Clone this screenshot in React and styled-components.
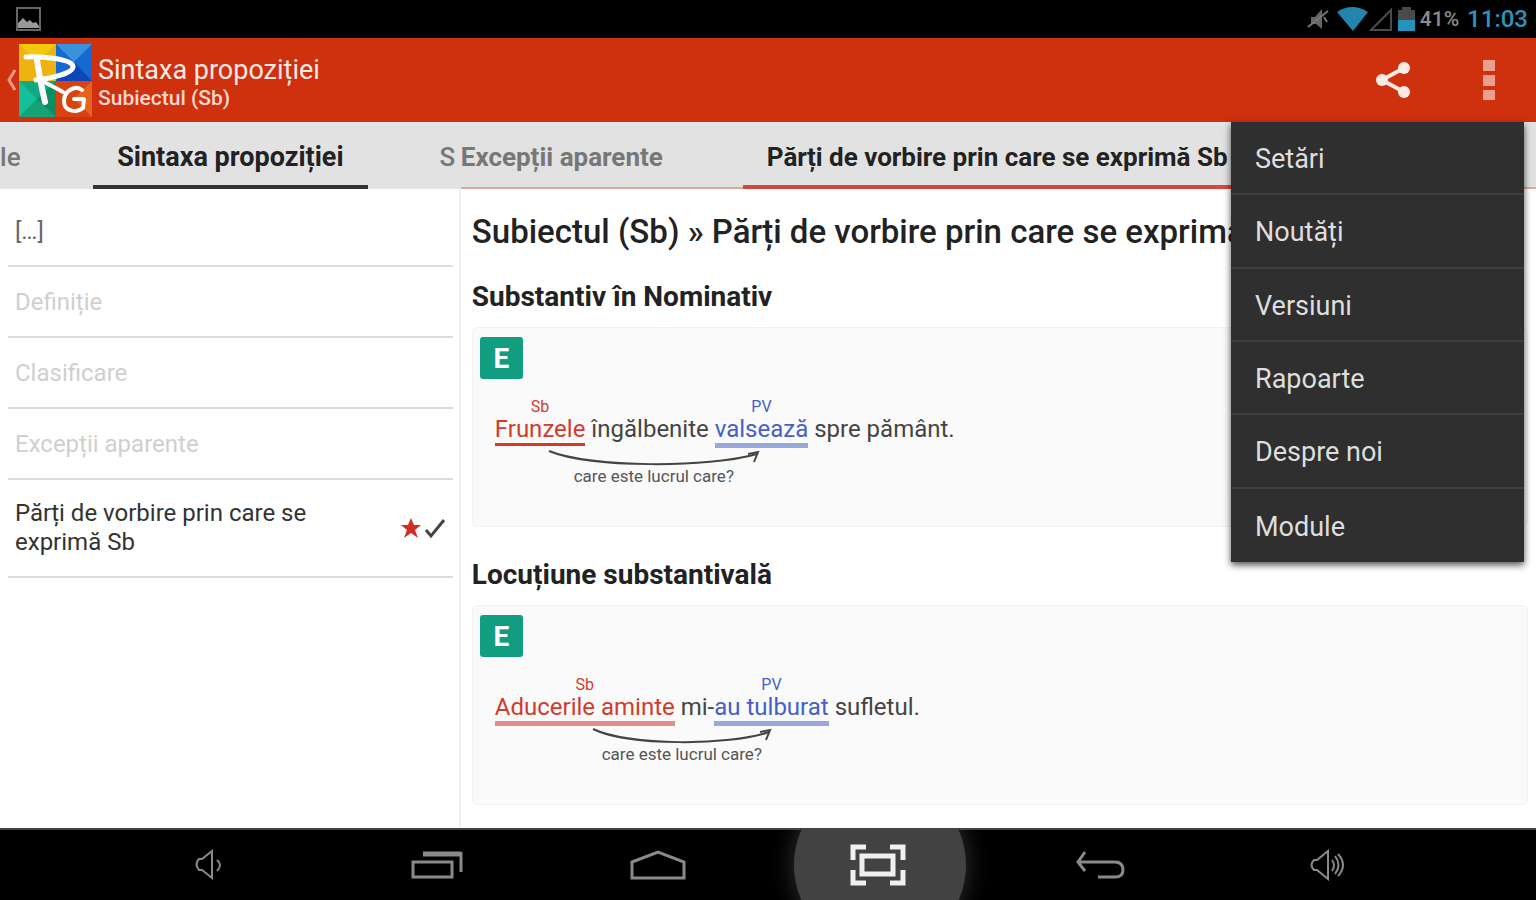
import styled, { createGlobalStyle } from "styled-components";

const GlobalStyle = createGlobalStyle`
  * {
    box-sizing: border-box;
  }
  body {
    margin: 0;
    font-family: Roboto, "Liberation Sans", sans-serif;
    background-color: #fff;
  }
  button {
    margin: 0;
    padding: 0;
    border: none;
    background: none;
    font: inherit;
    color: inherit;
    cursor: pointer;
  }
  svg {
    display: block;
  }
`;

const Container = styled.div`
  min-height: 100vh;
  display: flex;
  flex-direction: column;
`;

const StatusBar = styled.div`
  height: 38px;
  padding: 0 8px 0 15px;
  display: flex;
  align-items: center;
  justify-content: space-between;
  background-color: #000;
`;

const StatusIcons = styled.div`
  display: flex;
  align-items: center;
`;

const SignalIcon = styled.svg`
  margin-left: -9px;
`;

const Battery = styled.span`
  margin-left: 4px;
  font-size: 21px;
  font-weight: 500;
  color: #8c8c8c;
`;

const Clock = styled.span`
  margin-left: 8px;
  font-size: 24px;
  font-weight: 500;
  color: #2b94bd;
`;

const ActionBar = styled.header`
  position: relative;
  height: 84px;
  padding: 0 35px 0 6px;
  display: flex;
  align-items: center;
  justify-content: space-between;
  background-color: #cf300d;
`;

const Brand = styled.button`
  display: flex;
  align-items: center;
  gap: 3px;
  text-align: left;
`;

const Titles = styled.span`
  display: flex;
  flex-direction: column;
  padding: 4px 0 0 3px;
`;

const Title = styled.span`
  font-size: 27px;
  line-height: 32px;
  color: #fbe9e4;
`;

const Subtitle = styled.span`
  font-size: 21px;
  line-height: 25px;
  font-weight: 500;
  color: #fbd9d0;
`;

const Actions = styled.div`
  display: flex;
  align-items: center;
  gap: 66px;
`;

const Menu = styled.ul`
  position: absolute;
  top: 100%;
  right: 12px;
  z-index: 2;
  width: 293px;
  height: 440px;
  margin: 0;
  padding: 0;
  display: grid;
  grid-auto-rows: 1fr;
  list-style: none;
  background-color: #2f2f2f;
  box-shadow: 0 3px 7px rgba(0, 0, 0, 0.7);
`;

const MenuItem = styled.li`
  border-bottom: 2px solid #3e3e3e;
  &:last-child {
    border-bottom: none;
  }
`;

const MenuButton = styled.button`
  width: 100%;
  height: 100%;
  padding: 3px 24px 0;
  font-size: 27px;
  text-align: left;
  color: #dedede;
`;

const Main = styled.main`
  flex: 1;
  display: grid;
  grid-template-columns: 30% 1fr;
`;

const Side = styled.nav`
  min-width: 0;
  display: flex;
  flex-direction: column;
`;

const Content = styled.section`
  min-width: 0;
`;

const SideTabs = styled.div`
  height: 67px;
  display: grid;
  grid-template-columns: minmax(0, 1fr) auto minmax(0, 1fr);
  overflow: hidden;
  background-color: #e2e2e2;
`;

const ContentTabs = styled.div`
  height: 67px;
  display: flex;
  overflow: hidden;
  background-color: #e2e2e2;
  box-shadow: inset 0 -2px 0 #e0a79f;
`;

const Tab = styled.button`
  padding: 7px 24px 0;
  font-size: 26px;
  font-weight: 700;
  color: ${(props) => (props.$active ? "#222" : "#777")};
  white-space: nowrap;
  border-bottom: 4px solid ${(props) => props.$line || "transparent"};
`;

const SideTab = styled(Tab)`
  font-size: 27px;
`;

const PreviousTab = styled(Tab)`
  padding-left: 0;
  padding-right: 73px;
  font-weight: 500;
  text-align: right;
`;

const NextTab = styled(Tab)`
  padding-left: 72px;
  padding-right: 0;
  font-weight: 500;
  text-align: left;
`;

const FirstTab = styled(Tab)`
  padding-left: 0;
  padding-right: 80px;
`;

const List = styled.ul`
  flex: 1;
  margin: 0;
  padding: 7px 6px 7px 8px;
  list-style: none;
  border-right: 2px solid #f0f0f0;
`;

const Item = styled.li`
  border-bottom: 2px solid #dcdcdc;
`;

const ItemButton = styled.button`
  width: 100%;
  min-height: 69px;
  padding: ${(props) => (props.$active ? "19px 7px" : "2px 7px 0")};
  display: flex;
  align-items: center;
  justify-content: space-between;
  gap: 24px;
  font-size: 24px;
  line-height: 29px;
  text-align: left;
  color: ${(props) => props.$color};
`;

const ItemText = styled.span`
  max-width: 320px;
`;

const Marks = styled.span`
  display: flex;
  align-items: center;
  gap: 4px;
`;

const Article = styled.article`
  padding: 24px 8px 20px 11px;
`;

const Heading = styled.h1`
  margin: 0 0 30px;
  font-size: 33px;
  line-height: 38px;
  font-weight: 500;
  color: #222;
  white-space: nowrap;
  overflow: hidden;
`;

const SubHeading = styled.h2`
  margin: 0 0 14px;
  font-size: 28px;
  line-height: 32px;
  font-weight: 700;
  color: #222;
`;

const Card = styled.div`
  min-height: 200px;
  margin-bottom: 32px;
  padding: 9px 7px;
  border: 1px solid #f2f2f2;
  border-radius: 5px;
  background-color: #fafafa;
  &:last-child {
    margin-bottom: 0;
  }
`;

const Badge = styled.div`
  width: 43px;
  height: 42px;
  display: flex;
  align-items: center;
  justify-content: center;
  border-radius: 3px;
  font-size: 28px;
  font-weight: 700;
  color: #fff;
  background-color: #119e80;
`;

const Sentence = styled.p`
  margin: 36px 0 0 15px;
  font-size: 24px;
  line-height: 28px;
  color: #444;
`;

const Word = styled.span`
  position: relative;
  display: inline-block;
  color: ${(props) => props.$color};
  border-bottom: ${(props) => props.$line};
`;

const WordLabel = styled.span`
  position: absolute;
  left: 0;
  right: 0;
  bottom: 100%;
  font-size: 16px;
  line-height: 16px;
  text-align: center;
`;

const Link = styled.div`
  width: ${(props) => props.$width}px;
  margin: 2px 0 0 ${(props) => props.$start}px;
  display: flex;
  flex-direction: column;
  align-items: center;
`;

const Caption = styled.span`
  font-size: 17px;
  line-height: 18px;
  color: #555;
  white-space: nowrap;
`;

const NavBar = styled.footer`
  position: relative;
  height: 72px;
  padding: 0 6%;
  display: grid;
  grid-template-columns: 234fr 221fr 221fr 221fr 221fr 234fr;
  overflow: hidden;
  background-color: #000;
  border-top: 2px solid #444;
`;

const NavButton = styled.button`
  position: relative;
  display: flex;
  align-items: center;
  justify-content: center;
`;

const Ripple = styled.span`
  position: absolute;
  top: 50%;
  left: 50%;
  width: 172px;
  height: 172px;
  margin: -86px 0 0 -84px;
  border-radius: 50%;
  background-color: #424242;
  box-shadow: 0 0 24px #333;
`;

const NavIcon = styled.svg`
  position: relative;
  fill: none;
  stroke: ${(props) => props.$color || "#8a8a8a"};
`;

const menu = ["Setări", "Noutăți", "Versiuni", "Rapoarte", "Despre noi", "Module"];

const topics = [
  { text: "[…]", color: "#666" },
  { text: "Definiție", color: "#cfcfcf" },
  { text: "Clasificare", color: "#cfcfcf" },
  { text: "Excepții aparente", color: "#cfcfcf" },
  { text: "Părți de vorbire prin care se exprimă Sb", color: "#333", active: true },
];

const RED = "#d23a2c";
const BLUE = "#4560c8";

const Logo = () => (
  <svg width="73" height="73" viewBox="0 0 73 73">
    <path d="M0 0h37v37H0z" fill="#eeb211" />
    <path d="M0 0h37L18 18z" fill="#f3c90f" />
    <path d="M37 0h36v37H37z" fill="#1769d2" />
    <path d="M37 0h36L55 18z" fill="#3a92dc" />
    <path d="M37 37h36L55 18z" fill="#0d46b8" />
    <path d="M0 37h37v36H0z" fill="#12a982" />
    <path d="M0 37l18 18L0 73z" fill="#13c09a" />
    <path d="M0 73h37L18 55z" fill="#14a276" />
    <path d="M37 37l-19 18 19 18z" fill="#0d8e62" />
    <path d="M37 37h36v36H37z" fill="#d8430f" />
    <path d="M73 37v36L55 55z" fill="#e5641c" />
    <g fill="none" stroke="#fff" strokeLinecap="round" strokeLinejoin="round">
      <path d="M7 13C24 12 52 15 54 22C55 29 34 34 17 36" strokeWidth="5" />
      <path d="M18 16C20 30 23 45 26 58" strokeWidth="6" />
      <path d="M21 36C29 40 37 44 44 48" strokeWidth="4" />
      <path d="M63 46C57 41 46 46 45 56C44 68 58 69 64 64L65 55H55" strokeWidth="4" />
    </g>
  </svg>
);

const Arrow = ({ width }) => (
  <svg width={width} height="17" viewBox={`0 0 ${width} 17`} fill="none" stroke="#444">
    <path
      d={`M1 1C${width * 0.2} 18 ${width * 0.76} 18 ${width - 3} 4`}
      strokeWidth="2"
    />
    <path d={`M${width - 12} 4L${width - 2} 2L${width - 6} 12`} strokeWidth="2" />
  </svg>
);

const App = () => {
  return (
    <Container>
      <GlobalStyle />
      <StatusBar>
        <svg width="27" height="26" viewBox="0 0 27 26">
          <path d="M2 2h23v22H2z" fill="none" stroke="#666" strokeWidth="2" />
          <path d="M3 22v-5l5-5 4 4 3-2 3 3 3-1 3 4v2z" fill="#999" />
        </svg>
        <StatusIcons>
          <svg width="22" height="24" viewBox="0 0 22 24">
            <path d="M4 10h4l7-8v20l-6-5H4z" fill="#666" />
            <path d="M1 20L21 4M17 10l3 5" stroke="#777" strokeWidth="2" fill="none" />
          </svg>
          <svg width="49" height="26" viewBox="0 0 49 26">
            <path d="M8 6Q23-4 39 6L24 25z" fill="#2384ac" />
          </svg>
          <SignalIcon width="24" height="26" viewBox="0 0 24 26">
            <path d="M2 24L22 4v20z" fill="none" stroke="#4a4a4a" strokeWidth="2" />
          </SignalIcon>
          <svg width="23" height="26" viewBox="0 0 23 26">
            <path d="M9 1h9v3h4v10H5V4h4z" fill="#4a4a4a" />
            <path d="M5 14h17v11H5z" fill="#2593bd" />
          </svg>
          <Battery>41%</Battery>
          <Clock>11:03</Clock>
        </StatusIcons>
      </StatusBar>

      <ActionBar>
        <Brand>
          <svg width="10" height="22" viewBox="0 0 10 22">
            <path d="M9 1L3 11l6 10" fill="none" stroke="#ee9a86" strokeWidth="3" />
          </svg>
          <Logo />
          <Titles>
            <Title>Sintaxa propoziției</Title>
            <Subtitle>Subiectul (Sb)</Subtitle>
          </Titles>
        </Brand>
        <Actions>
          <button aria-label="Distribuie">
            <svg width="36" height="36" viewBox="0 0 36 36" fill="#fdebe6">
              <path d="M29 6L7 18l22 12" fill="none" stroke="#fdebe6" strokeWidth="4" />
              <circle cx="7" cy="18" r="6" />
              <circle cx="29" cy="6" r="6" />
              <circle cx="29" cy="30" r="6" />
            </svg>
          </button>
          <button aria-label="Mai multe">
            <svg width="24" height="42" viewBox="0 0 24 42" fill="#eb9f8d">
              <path d="M6 1h12v11H6zM6 16h12v11H6zM6 31h12v10H6z" />
            </svg>
          </button>
        </Actions>
        <Menu>
          {menu.map((text) => (
            <MenuItem key={text}>
              <MenuButton>{text}</MenuButton>
            </MenuItem>
          ))}
        </Menu>
      </ActionBar>

      <Main>
        <Side>
          <SideTabs>
            <PreviousTab>le</PreviousTab>
            <SideTab $active $line="#333">
              Sintaxa propoziției
            </SideTab>
            <NextTab>S</NextTab>
          </SideTabs>
          <List>
            {topics.map((topic) => (
              <Item key={topic.text}>
                <ItemButton $color={topic.color} $active={topic.active}>
                  <ItemText>{topic.text}</ItemText>
                  {topic.active && (
                    <Marks>
                      <svg width="20" height="20" viewBox="0 0 20 20">
                        <path
                          d="M10 0l3 7h7l-6 5 3 8-7-5-7 5 3-8-6-5h7z"
                          fill="#cc3022"
                        />
                      </svg>
                      <svg width="21" height="21" viewBox="0 0 21 21">
                        <path d="M1 12l5 6L19 2" fill="none" stroke="#444" strokeWidth="3" />
                      </svg>
                    </Marks>
                  )}
                </ItemButton>
              </Item>
            ))}
          </List>
        </Side>

        <Content>
          <ContentTabs>
            <FirstTab>Excepții aparente</FirstTab>
            <Tab $active $line="#d6473b">
              Părți de vorbire prin care se exprimă Sb
            </Tab>
          </ContentTabs>
          <Article>
            <Heading>Subiectul (Sb) » Părți de vorbire prin care se exprimă Sb</Heading>

            <SubHeading>Substantiv în Nominativ</SubHeading>
            <Card>
              <Badge>E</Badge>
              <Sentence>
                <Word $color={RED} $line="3px solid #d9372b">
                  <WordLabel>Sb</WordLabel>Frunzele
                </Word>{" "}
                îngălbenite{" "}
                <Word $color={BLUE} $line="5px solid #9aa7dc">
                  <WordLabel>PV</WordLabel>valsează
                </Word>{" "}
                spre pământ.
              </Sentence>
              <Link $width={212} $start={68}>
                <Arrow width={212} />
                <Caption>care este lucrul care?</Caption>
              </Link>
            </Card>

            <SubHeading>Locuțiune substantivală</SubHeading>
            <Card>
              <Badge>E</Badge>
              <Sentence>
                <Word $color={RED} $line="5px solid #e0908c">
                  <WordLabel>Sb</WordLabel>Aducerile aminte
                </Word>{" "}
                mi-
                <Word $color={BLUE} $line="5px solid #9aa7dc">
                  <WordLabel>PV</WordLabel>au tulburat
                </Word>{" "}
                sufletul.
              </Sentence>
              <Link $width={180} $start={112}>
                <Arrow width={180} />
                <Caption>care este lucrul care?</Caption>
              </Link>
            </Card>
          </Article>
        </Content>
      </Main>

      <NavBar>
        <NavButton aria-label="Volum mai mic">
          <NavIcon width="32" height="32" viewBox="0 0 32 32" strokeWidth="2">
            <path d="M6 10q-5 5 0 11l3 0 10 8V2L9 10zM24 11q6 5 0 11" />
          </NavIcon>
        </NavButton>
        <NavButton aria-label="Aplicații recente">
          <NavIcon width="52" height="30" viewBox="0 0 52 30" strokeWidth="3">
            <path d="M2 12h39v15H2z" />
            <path d="M12 4h38" strokeWidth="5" />
            <path d="M50 2v20" />
          </NavIcon>
        </NavButton>
        <NavButton aria-label="Acasă">
          <NavIcon width="56" height="32" viewBox="0 0 56 32" strokeWidth="3">
            <path d="M2 13L28 3l26 10v16H2z" />
          </NavIcon>
        </NavButton>
        <NavButton aria-label="Captură de ecran">
          <Ripple />
          <NavIcon width="56" height="44" viewBox="0 0 56 44" strokeWidth="5" $color="#f0f0f0">
            <path d="M3 17V4h13M40 4h13v13M53 27v13H40M16 40H3V27" />
            <path d="M12 13h31v18H12z" />
          </NavIcon>
        </NavButton>
        <NavButton aria-label="Înapoi">
          <NavIcon width="52" height="30" viewBox="0 0 52 30" strokeWidth="3">
            <path d="M12 2L5 12l7 9M5 12h37q8 0 8 8 0 7-8 7H25" />
          </NavIcon>
        </NavButton>
        <NavButton aria-label="Volum mai mare">
          <NavIcon width="38" height="32" viewBox="0 0 38 32" strokeWidth="2">
            <path d="M6 11q-5 5 0 10l3 0 11 9V2L9 11zM24 11q4 5 0 11M27 7q7 9 0 18M30 5q10 11 0 22" />
          </NavIcon>
        </NavButton>
      </NavBar>
    </Container>
  );
};

export default App;
